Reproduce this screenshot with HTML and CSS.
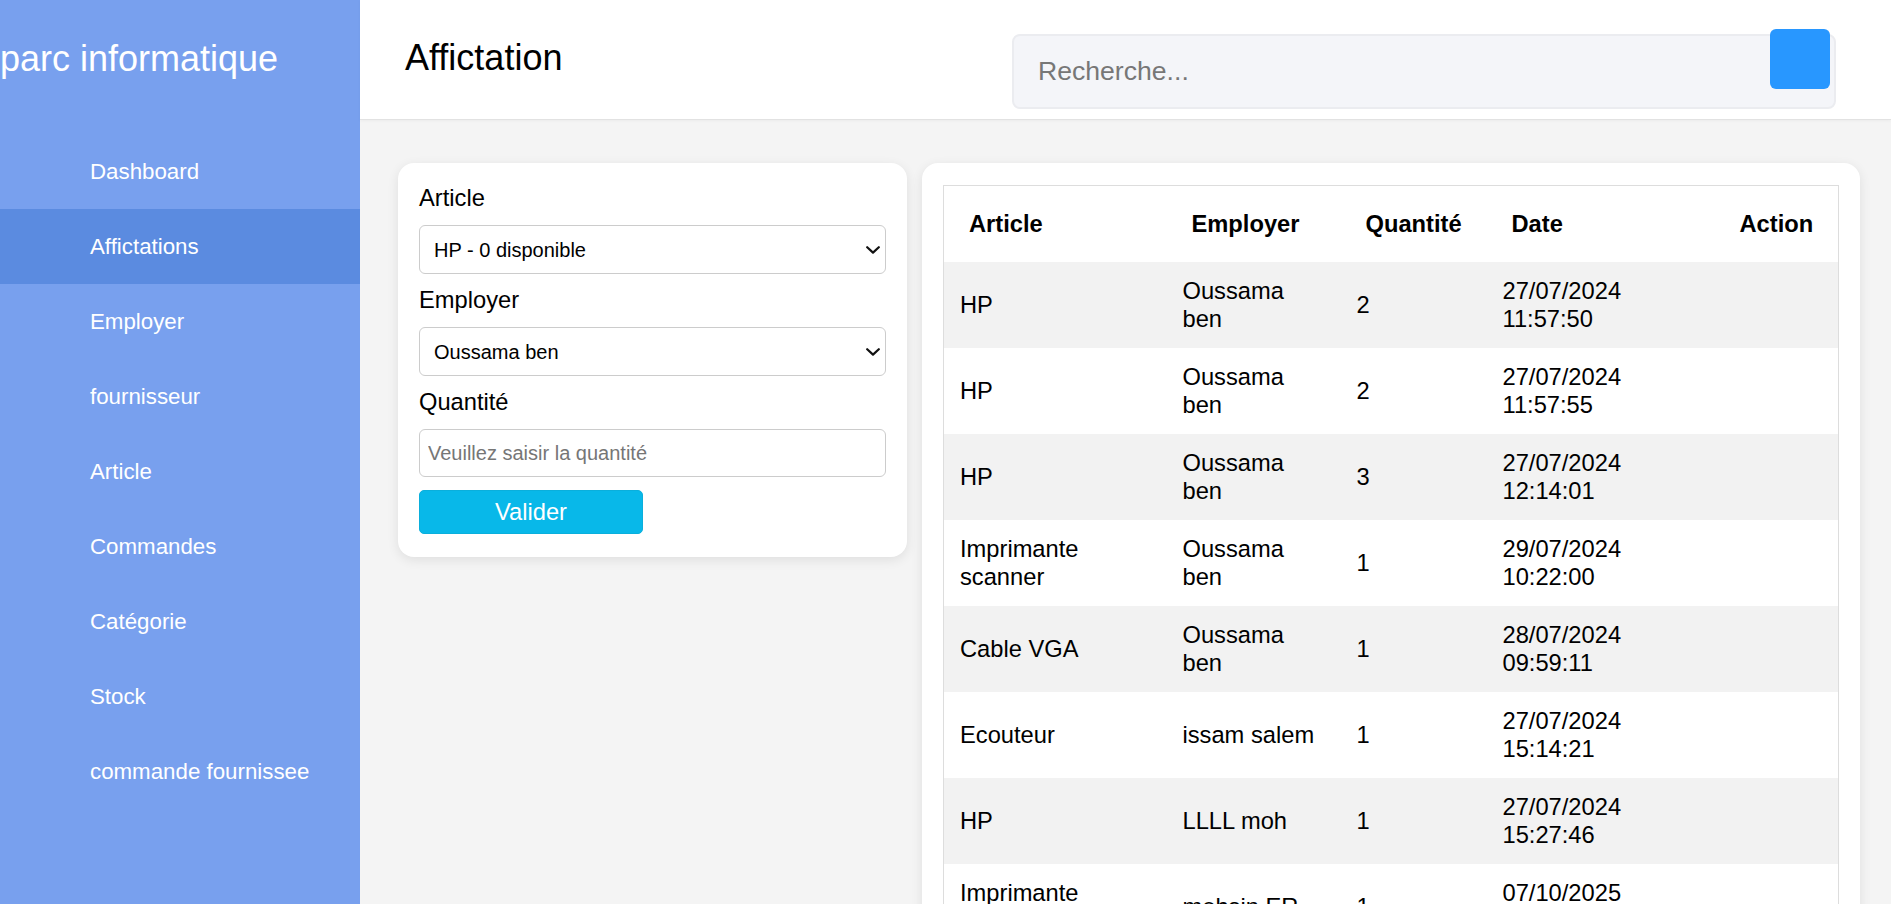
FILE: index.html
```html
<!DOCTYPE html>
<html lang="fr">
<head>
<meta charset="utf-8">
<title>Affictation - parc informatique</title>
<link rel="stylesheet" href="styles.css">
</head>
<body>
<div class="app">
  <aside class="sidebar">
    <div class="logo">parc informatique</div>
    <nav class="nav">
      <a class="nav-item" href="#">Dashboard</a>
      <a class="nav-item active" href="#">Affictations</a>
      <a class="nav-item" href="#">Employer</a>
      <a class="nav-item" href="#">fournisseur</a>
      <a class="nav-item" href="#">Article</a>
      <a class="nav-item" href="#">Commandes</a>
      <a class="nav-item" href="#">Catégorie</a>
      <a class="nav-item" href="#">Stock</a>
      <a class="nav-item" href="#">commande fournissee</a>
    </nav>
  </aside>
  <div class="main">
    <header class="topbar">
      <h1 class="page-title">Affictation</h1>
      <div class="search">
        <input class="search-input" type="text" placeholder="Recherche...">
        <button class="search-btn" type="button" aria-label="Rechercher"></button>
      </div>
    </header>
    <div class="content">
      <form class="card form-card">
        <label class="field-label" for="article">Article</label>
        <div class="select-wrap">
          <select class="field-control select" id="article">
            <option>HP - 0 disponible</option>
          </select>
          <svg class="chevron" width="14" height="8" viewBox="0 0 14 8" aria-hidden="true"><path d="M1.2 1.2 L7 6.6 L12.8 1.2" fill="none" stroke="#111" stroke-width="2.2" stroke-linecap="round" stroke-linejoin="round"/></svg>
        </div>
        <label class="field-label" for="employer">Employer</label>
        <div class="select-wrap">
          <select class="field-control select" id="employer">
            <option>Oussama ben</option>
          </select>
          <svg class="chevron" width="14" height="8" viewBox="0 0 14 8" aria-hidden="true"><path d="M1.2 1.2 L7 6.6 L12.8 1.2" fill="none" stroke="#111" stroke-width="2.2" stroke-linecap="round" stroke-linejoin="round"/></svg>
        </div>
        <label class="field-label" for="quantite">Quantité</label>
        <input class="field-control input" id="quantite" type="text" placeholder="Veuillez saisir la quantité">
        <button class="btn-submit" type="button">Valider</button>
      </form>
      <section class="card table-card">
        <table class="data-table">
          <colgroup>
            <col class="c-article">
            <col class="c-employer">
            <col class="c-qty">
            <col class="c-date">
            <col class="c-action">
          </colgroup>
          <thead>
            <tr><th>Article</th><th>Employer</th><th>Quantité</th><th>Date</th><th>Action</th></tr>
          </thead>
          <tbody>
            <tr><td>HP</td><td>Oussama ben</td><td>2</td><td>27/07/2024 11:57:50</td><td></td></tr>
            <tr><td>HP</td><td>Oussama ben</td><td>2</td><td>27/07/2024 11:57:55</td><td></td></tr>
            <tr><td>HP</td><td>Oussama ben</td><td>3</td><td>27/07/2024 12:14:01</td><td></td></tr>
            <tr><td>Imprimante scanner</td><td>Oussama ben</td><td>1</td><td>29/07/2024 10:22:00</td><td></td></tr>
            <tr><td>Cable VGA</td><td>Oussama ben</td><td>1</td><td>28/07/2024 09:59:11</td><td></td></tr>
            <tr><td>Ecouteur</td><td>issam salem</td><td>1</td><td>27/07/2024 15:14:21</td><td></td></tr>
            <tr><td>HP</td><td>LLLL moh</td><td>1</td><td>27/07/2024 15:27:46</td><td></td></tr>
            <tr><td>Imprimante scanner</td><td>mohsin ER</td><td>1</td><td>07/10/2025 10:15:32</td><td></td></tr>
          </tbody>
        </table>
      </section>
    </div>
  </div>
</div>
</body>
</html>
```
FILE: styles.css
```css
* { box-sizing: border-box; }
html, body { margin: 0; padding: 0; }
body {
  font-family: "Liberation Sans", Arial, sans-serif;
  color: #000;
  background: #f4f4f4;
}
.app {
  display: flex;
  height: 100vh;
  overflow: hidden;
}
.sidebar {
  width: 360px;
  flex: 0 0 360px;
  background: #78a0ee;
  color: #fff;
}
.logo {
  height: 134px;
  padding-top: 38px;
  font-size: 36px;
  line-height: normal;
  white-space: nowrap;
}
.nav { display: flex; flex-direction: column; }
.nav-item {
  display: flex;
  align-items: center;
  height: 75px;
  padding-left: 90px;
  color: #fff;
  text-decoration: none;
  font-size: 22.3px;
}
.nav-item.active { background: #5b8be0; }
.main {
  flex: 1;
  display: flex;
  flex-direction: column;
  min-width: 0;
  background: #f4f4f4;
}
.topbar {
  height: 120px;
  flex: 0 0 120px;
  background: #fff;
  border-bottom: 1px solid #e2e2e2;
  box-shadow: 0 1px 3px rgba(0,0,0,0.04);
  display: flex;
  align-items: flex-start;
  justify-content: space-between;
  padding: 0 55px 0 45px;
}
.page-title {
  margin: 37px 0 0;
  font-size: 36px;
  font-weight: 400;
  line-height: normal;
}
.search {
  position: relative;
  margin-top: 34px;
  width: 824px;
  height: 75px;
}
.search-input {
  width: 100%;
  height: 100%;
  background: #f4f5f9;
  border: 2px solid #ebecf0;
  border-radius: 8px;
  padding: 0 24px;
  font-family: inherit;
  font-size: 26.6px;
  color: #333;
  outline: none;
}
.search-input::placeholder { color: #777; }
.search-btn {
  position: absolute;
  top: -5px;
  right: 6px;
  width: 60px;
  height: 60px;
  border: none;
  border-radius: 6px;
  background: #2897ff;
  padding: 0;
}
.content {
  display: flex;
  align-items: flex-start;
  gap: 15px;
  padding: 43px 31px 0 38px;
}
.card {
  background: #fff;
  border-radius: 16px;
  box-shadow: 0 3px 12px rgba(0,0,0,0.09);
}
.form-card {
  width: 509px;
  flex: 0 0 509px;
  display: flex;
  flex-direction: column;
  align-items: flex-start;
  gap: 13px;
  padding: 22px 21px 23px;
  margin: 0;
}
.field-label {
  font-size: 23.7px;
  line-height: normal;
}
.field-control {
  width: 100%;
  border: 1px solid #cccccc;
  border-radius: 6px;
  background: #fff;
  font-family: inherit;
  font-size: 20px;
  color: #000;
}
.select-wrap {
  position: relative;
  width: 100%;
}
.select {
  display: block;
  height: 49px;
  padding: 0 30px 0 14px;
  appearance: none;
  -webkit-appearance: none;
}
.chevron {
  position: absolute;
  right: 6px;
  top: 50%;
  transform: translateY(-50%);
  pointer-events: none;
}
.input {
  height: 48px;
  padding: 0 8px;
  outline: none;
}
.input::placeholder { color: #767676; }
.btn-submit {
  width: 224px;
  height: 44px;
  border: 1px solid #0aafdc;
  border-radius: 5px;
  background: #08b8e9;
  color: #fff;
  font-family: inherit;
  font-size: 23.7px;
  padding: 0;
}
.table-card {
  flex: 1;
  min-width: 0;
  padding: 22px 21px 22px 21px;
}
.data-table {
  width: 100%;
  table-layout: fixed;
  border-collapse: collapse;
  border: 1px solid #dddddd;
  font-size: 23.7px;
  line-height: 28px;
}
.c-article { width: 223px; }
.c-employer { width: 174px; }
.c-qty { width: 146px; }
.c-date { width: 228px; }
.data-table th {
  text-align: left;
  font-weight: 700;
  padding: 24px 25px;
  background: #fff;
}
.data-table td {
  text-align: left;
  vertical-align: middle;
  padding: 15px 16px;
}
.data-table tbody tr:nth-child(odd) td { background: #f2f2f2; }
.data-table tbody tr:nth-child(even) td { background: #fff; }
```
